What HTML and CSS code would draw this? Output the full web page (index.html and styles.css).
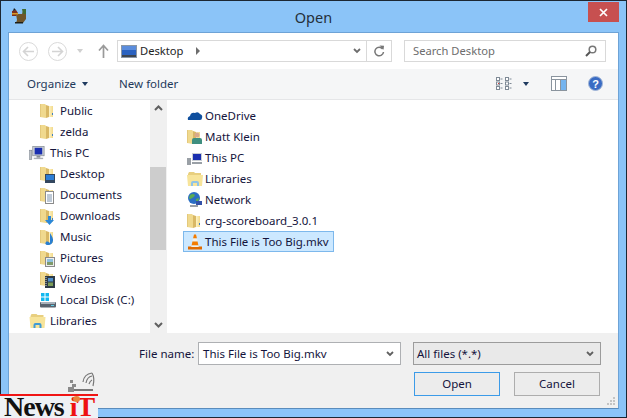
FILE: index.html
```html
<!DOCTYPE html>
<html lang="en">
<head>
<meta charset="utf-8">
<title>Open</title>
<link rel="stylesheet" href="styles.css">
</head>
<body>
<svg class="defs" width="0" height="0" aria-hidden="true">
  <defs>
    <linearGradient id="fy" x1="0" y1="0" x2="1" y2="0"><stop offset="0" stop-color="#fdf3c4"/><stop offset="1" stop-color="#f2d98a"/></linearGradient>
    <symbol id="folder" viewBox="0 0 16 16">
      <path d="M0 1h5l1 1v13l-6-1z" fill="#f0d98e"/>
      <path d="M0 1v13" stroke="#cfae5c" stroke-width=".7"/>
      <path d="M6 2l3 1v11l-3 1z" fill="#d9b865"/>
      <path d="M9 3h4v11H9z" fill="url(#fy)"/>
      <path d="M12 10h1v2h-1z" fill="#3f7fc0"/>
    </symbol>
  </defs>
</svg>
<div class="window">
  <header class="titlebar">
    <svg class="app-icon" width="16" height="16" viewBox="0 0 16 16"><path d="M5 6h6l1-3h3v8l-3 4H5l1-3z" fill="#6f552c"/><path d="M11 1h4v5h-3z" fill="#3f6b34"/><path d="M1 3l4-1 2 3-2 3H1z" fill="#7d2e1c"/><path d="M3 0l2 2-3 1z" fill="#1c1c1c"/><path d="M1 5h6v1.500H1z" fill="#d89a28"/><path d="M4 14h8v1.500H4z" fill="#1f1f16"/></svg>
    <h1 class="title">Open</h1>
    <button class="close" aria-label="Close"><svg width="9" height="9" viewBox="0 0 9 9"><path d="M1 1l7 7M8 1l-7 7" stroke="#fff" stroke-width="1.7"/></svg></button>
  </header>
  <main class="client">
    <nav class="navbar">
      <span class="circle"><svg width="13" height="11" viewBox="0 0 13 11"><path d="M6 1L1.500 5.500 6 10M2 5.500h10" fill="none" stroke="#d4d4d4" stroke-width="1.600"/></svg></span>
      <span class="circle"><svg width="13" height="11" viewBox="0 0 13 11"><path d="M7 1l4.500 4.500L7 10M11 5.500H1" fill="none" stroke="#d4d4d4" stroke-width="1.600"/></svg></span>
      <i class="caret caret-light"></i>
      <svg class="up" width="11" height="14" viewBox="0 0 11 14"><path d="M5.500 14V2M1 6.500l4.500-5 4.500 5" fill="none" stroke="#9a9a9a" stroke-width="1.700"/></svg>
      <div class="address">
        <svg class="desk" width="16" height="13" viewBox="0 0 16 13"><rect width="16" height="13" fill="#8a97a6"/><rect x="1" y="1" width="14" height="9" fill="#2a62c0"/><rect x="1" y="1" width="14" height="4" fill="#5b8ddd"/><rect x="1" y="10" width="14" height="2" fill="#3d4650"/></svg>
        <span class="crumb">Desktop</span>
        <i class="crumb-arrow"></i>
        <span class="grow"></span>
        <svg class="chev" width="8" height="6" viewBox="0 0 8 6"><path d="M1 1l3 3 3-3" fill="none" stroke="#6d6d6d" stroke-width="1.800"/></svg>
        <span class="refresh"><svg width="11" height="12" viewBox="0 0 11 12"><path d="M8.700 4A4.300 4.300 0 1 0 9.500 7" fill="none" stroke="#777" stroke-width="1.500"/><path d="M5.500 0.500l4.500.2-.5 4z" fill="#777"/></svg></span>
      </div>
      <div class="search">
        <span>Search Desktop</span>
        <svg width="12" height="12" viewBox="0 0 12 12"><circle cx="7.500" cy="4.500" r="3.300" fill="none" stroke="#777" stroke-width="1.500"/><path d="M5 7l-4 4" stroke="#555" stroke-width="2"/></svg>
      </div>
    </nav>
    <div class="toolbar">
      <span class="tool">Organize</span><i class="caret caret-dark"></i>
      <span class="tool newfolder">New folder</span>
      <span class="grow"></span>
      <svg class="views" width="16" height="13" viewBox="0 0 16 13"><g fill="#fff" stroke="#7f8a96"><rect x=".5" y=".5" width="3" height="3"/><rect x=".5" y="5" width="3" height="3"/><rect x=".5" y="9.500" width="3" height="3"/><rect x="9.500" y=".5" width="3" height="3"/><rect x="9.500" y="5" width="3" height="3"/><rect x="9.500" y="9.500" width="3" height="3"/></g><path d="M4.500 2h2M4.500 6.500h2M4.500 11h2M13.500 2h2M13.500 6.500h2M13.500 11h2" stroke="#7f8a96"/><rect x="2" y="6" width="1" height="1" fill="#d33"/></svg>
      <i class="caret caret-dark caret-views"></i>
      <svg class="pane-icon" width="16" height="15" viewBox="0 0 16 15"><rect x=".5" y=".5" width="15" height="14" fill="#fff" stroke="#8a949e"/><path d="M.5 3.500h15M4.500 3.500v11M9.500 3.500v11" stroke="#8a949e"/><rect x="10" y="4" width="5" height="10" fill="#74b4ef"/></svg>
      <svg class="help" width="15" height="15" viewBox="0 0 15 15"><circle cx="7.500" cy="7.500" r="7" fill="#3a6cc4" stroke="#a3b7d6"/><text x="7.500" y="11.500" class="help-q">?</text></svg>
    </div>
    <div class="panes">
      <ul class="tree">
        <li class="child"><svg class="ico"><use href="#folder"/></svg>Public</li>
        <li class="child"><svg class="ico"><use href="#folder"/></svg>zelda</li>
        <li class="root"><svg class="ico" viewBox="0 0 18 16"><rect x="4" y="1" width="12" height="10" fill="#c9ced4" stroke="#6e7680" stroke-width=".6"/><rect x="6" y="2.500" width="8" height="7" fill="#1a2fb0"/><rect x="8" y="11" width="4" height="2" fill="#8a9098"/><rect x="5" y="13" width="10" height="1.500" fill="#a9aeb4"/><rect x="0" y="5" width="3" height="10" fill="#b9bec4" stroke="#6e7680" stroke-width=".5"/></svg>This PC</li>
        <li class="child"><svg class="ico"><use href="#folder"/></svg><svg class="badge" width="10" height="9" viewBox="0 0 10 9"><rect width="10" height="9" fill="#33475f"/><rect x="1" y="1" width="8" height="5" fill="#2c7ed6"/></svg>Desktop</li>
        <li class="child"><svg class="ico"><use href="#folder"/></svg><svg class="badge" width="9" height="13" viewBox="0 0 9 13"><rect x=".5" y=".5" width="8" height="12" fill="#fff" stroke="#8b8b8b"/><path d="M2 4h5M2 6h5M2 8h5M2 10h5" stroke="#7d93ad"/></svg>Documents</li>
        <li class="child"><svg class="ico"><use href="#folder"/></svg><svg class="badge" width="9" height="9" viewBox="0 0 9 9"><path d="M3 0h3v4h3L4.500 9 0 4h3z" fill="#2b88d8"/></svg>Downloads</li>
        <li class="child"><svg class="ico"><use href="#folder"/></svg><svg class="badge" width="9" height="13" viewBox="0 0 9 13"><path d="M5 0c1 2 3 4 3 7s-2 5-5 5-3-2-2-3 3 0 4 1z" fill="#2a7fd0"/></svg>Music</li>
        <li class="child"><svg class="ico"><use href="#folder"/></svg><svg class="badge" width="10" height="10" viewBox="0 0 10 10"><rect x=".5" y=".5" width="9" height="9" fill="#eee" stroke="#8a8a8a"/><rect x="2" y="2" width="6" height="3" fill="#8fc0dd"/><rect x="2" y="5" width="6" height="3" fill="#7f9a6a"/></svg>Pictures</li>
        <li class="child"><svg class="ico"><use href="#folder"/></svg><svg class="badge" width="10" height="12" viewBox="0 0 10 12"><rect width="10" height="12" fill="#2d3a45"/><rect x="3" y="2" width="5" height="3.500" fill="#4f8ec9"/><rect x="3" y="6.500" width="5" height="3.500" fill="#7b9c58"/><path d="M1 1v10" stroke="#ddd" stroke-dasharray="1 1"/></svg>Videos</li>
        <li class="child"><svg class="ico" viewBox="0 0 16 16"><path d="M1 1h3.500v3.500H1zM5.500 1H9v3.500H5.500zM1 5.500h3.500V9H1zM5.500 5.500H9V9H5.500z" fill="#12b8f0"/><rect x="0" y="10" width="16" height="5.500" rx="1" fill="#59636e"/><rect x="1" y="10" width="14" height="2" fill="#a8b2bc"/><rect x="11" y="13" width="3" height="1" fill="#5fd0e8"/></svg>Local Disk (C:)</li>
        <li class="root"><svg class="ico" viewBox="0 0 16 16"><path d="M1 3l1-2h5l1 1h6v2H1z" fill="#e8cf7f"/><path d="M0 4h16l-1 11H1z" fill="#f7e49a"/><path d="M4 15v-3q0-2 2-2h4q2 0 2 2v3h-2v-3H6v3z" fill="#3f9ad6"/></svg>Libraries</li>
      </ul>
      <div class="scrollbar">
        <svg class="sb-arrow" width="9" height="6" viewBox="0 0 9 6"><path d="M1 5l3.500-3.500L8 5" fill="none" stroke="#606060" stroke-width="2"/></svg>
        <div class="thumb"></div>
        <svg class="sb-arrow" width="9" height="6" viewBox="0 0 9 6"><path d="M1 1l3.500 3.500L8 1" fill="none" stroke="#606060" stroke-width="2"/></svg>
      </div>
      <ul class="files">
        <li><svg class="ico" viewBox="0 0 16 16"><path d="M1 12q-1-3 2-4 1-4 5-3 3-2 5 1 3 1 2 4 0 2-2 2H3q-1 0-2 0z" fill="#0f4f9e"/></svg>OneDrive</li>
        <li><svg class="ico"><use href="#folder"/></svg><svg class="badge-file" width="10" height="12" viewBox="0 0 10 12"><circle cx="5" cy="3" r="2.500" fill="#d9a98a"/><path d="M0 12V8q0-2 2-2h6q2 0 2 2v4z" fill="#3f8f7f"/></svg>Matt Klein</li>
        <li><svg class="ico" viewBox="0 0 16 16"><rect x="5" y="3" width="10" height="8" fill="#c9ced4"/><rect x="6" y="4" width="8" height="6" fill="#1a2fb0"/><rect x="0" y="8" width="4" height="7" fill="#9aa0a6"/><rect x="5" y="12" width="10" height="2" fill="#9aa0a6"/></svg>This PC</li>
        <li><svg class="ico" viewBox="0 0 16 16"><path d="M1 3l1-2h5l1 1h6v2H1z" fill="#e8cf7f"/><path d="M0 4h16l-1 11H1z" fill="#f7e49a"/><path d="M4 15v-3q0-2 2-2h4q2 0 2 2v3h-2v-3H6v3z" fill="#8fc4e8"/></svg>Libraries</li>
        <li><svg class="ico" viewBox="0 0 16 16"><circle cx="7" cy="6" r="6" fill="#2b6fc4"/><path d="M3 3q3-2 5 0-1 3-3 3-2 2-3 0zM9 7l3-1-1 4-2 1z" fill="#5bab52"/><rect x="9" y="9" width="6" height="4" fill="#3352a8"/><rect x="3" y="13" width="8" height="2" fill="#9aa0a6"/></svg>Network</li>
        <li><svg class="ico"><use href="#folder"/></svg>crg-scoreboard_3.0.1</li>
        <li class="selected"><svg class="ico" viewBox="0 0 16 16"><path d="M7 0.500h2l1 4H6z" fill="#f47c00"/><path d="M6 4.500h4l.6 3H5.400z" fill="#f4f0e8"/><path d="M5.400 7.500h5.200l.8 4H4.600z" fill="#f47c00"/><path d="M1 12.500h14v3H1z" fill="#e06a00"/><path d="M4.600 11.500h6.800l.4 1.500H4.200z" fill="#f4f0e8"/></svg>This File is Too Big.mkv</li>
      </ul>
    </div>
    <footer class="footer">
      <div class="row">
        <label class="fname-label">File name:</label>
        <div class="combo"><span>This File is Too Big.mkv</span><svg width="8" height="6" viewBox="0 0 8 6"><path d="M1 1l3 3 3-3" fill="none" stroke="#606060" stroke-width="1.800"/></svg></div>
        <div class="combo filter"><span>All files (*.*)</span><svg width="8" height="6" viewBox="0 0 8 6"><path d="M1 1l3 3 3-3" fill="none" stroke="#606060" stroke-width="1.800"/></svg></div>
      </div>
      <div class="row buttons">
        <button class="btn default">Open</button>
        <button class="btn">Cancel</button>
      </div>
      <svg class="grip" width="8" height="8" viewBox="0 0 8 8"><path d="M6 0h2v2H6zM3 3h2v2H3zM6 3h2v2H6zM0 6h2v2H0zM3 6h2v2H3zM6 6h2v2H6z" fill="#c4c4c4"/></svg>
    </footer>
  </main>
  <div class="watermark">
    <svg class="wm-key" width="30" height="22" viewBox="0 0 30 22"><path d="M4 19h22" stroke="#777" stroke-width="2"/><path d="M1 16h6v5H1zM5 13h4v3H5zM3 9h3v3H3z" fill="#8a8a8a"/><path d="M16 11q1-8 9-9M19 12q1-6 6-7M22 13q1-3 3-4" fill="none" stroke="#777" stroke-width="1.200"/><path d="M25 2q3 5 1 13" fill="none" stroke="#777" stroke-width="1.200"/></svg>
    <span class="wm-dot"></span>
    <span class="wm-text">News <b>iT</b></span>
  </div>
</div>
</body>
</html>
```

FILE: styles.css
```css
* { box-sizing: border-box; }
html, body { margin: 0; padding: 0; }
body { width: 627px; height: 418px; overflow: hidden; font: 11.5px/16px "Noto Sans", sans-serif; color: #1e1e3c; }
.defs { position: absolute; }
ul { list-style: none; margin: 0; padding: 0; }
.grow { flex: 1; }

.window { position: relative; width: 627px; height: 418px; display: flex; flex-direction: column; background: #8bc4f8; border: 1px solid #1c2733; }
.titlebar { height: 31px; display: flex; align-items: center; justify-content: center; position: relative; flex: none; }
.app-icon { position: absolute; left: 10px; top: 7px; }
.title { margin: 0; font: 400 14.5px/20px "Noto Sans", sans-serif; color: #25303a; }
.close { position: absolute; right: 7px; top: 1px; width: 31px; height: 20px; padding: 0; border: 0; background: #c75050; display: flex; align-items: center; justify-content: center; }

.client { flex: 1; margin: 0 7px 8px; border: 1px solid #6ea3d6; border-bottom-color: #5a8cbc; background: #f0f0f0; display: flex; flex-direction: column; min-height: 0; }
.navbar { height: 36px; flex: none; background: #fff; display: flex; align-items: center; padding: 0 12px 0 10px; }
.circle { width: 19px; height: 19px; border: 1px solid #dadada; border-radius: 50%; display: flex; align-items: center; justify-content: center; margin-right: 10px; }
.caret { display: block; width: 0; height: 0; border-style: solid; border-width: 4px 3.500px 0; border-color: transparent; }
.caret-light { border-top-color: #d0d0d0; margin-right: 15px; }
.caret-dark { border-top-color: #1e3a5f; }
.up { margin-right: 8px; }
.address { width: 275px; height: 22px; border: 1px solid #d9d9d9; display: flex; align-items: center; padding-left: 3px; font-size: 11.2px; }
.desk { margin-right: 3px; }
.crumb { color: #1e1e1e; }
.crumb-arrow { width: 0; height: 0; border-style: solid; border-width: 4px 0 4px 4px; border-color: transparent transparent transparent #6d6d6d; margin-left: 12px; }
.chev { margin-right: 5px; }
.refresh { width: 25px; height: 20px; border-left: 1px solid #d9d9d9; display: flex; align-items: center; justify-content: center; }
.search { width: 202px; height: 22px; margin-left: 12px; border: 1px solid #d9d9d9; display: flex; align-items: center; justify-content: space-between; padding: 0 8px; color: #6d6d6d; font-size: 11.2px; }

.toolbar { height: 31px; flex: none; background: #f5f6f7; border-bottom: 1px solid #e5e6e8; display: flex; align-items: center; padding: 0 15px 1px 18px; color: #1e395b; }
.toolbar .caret-dark { margin-left: 6px; }
.newfolder { margin-left: 31px; }
.views { margin-right: 11px; }
.caret-views { margin-left: 0 !important; margin-right: 22px; }
.pane-icon { margin-right: 21px; }
.help-q { font: 700 11px "Liberation Sans", sans-serif; fill: #fff; text-anchor: middle; }

.panes { height: 233px; flex: none; display: flex; background: #fff; }
.tree { width: 141px; overflow: hidden; flex: none; }
.tree li { height: 21px; display: flex; align-items: center; position: relative; color: #14143c; white-space: nowrap; }
.ico { width: 16px; height: 16px; flex: none; }
.tree .root { padding-left: 20px; }
.tree .child { padding-left: 31px; }
.tree .root .ico { margin-right: 4px; width: 17px; }
.tree .child .ico { margin-right: 4px; }
.badge { position: absolute; left: 36px; bottom: 1px; }
.badge-file { position: absolute; left: 8px; bottom: 2px; }
.scrollbar { width: 16px; flex: none; background: #f0f0f0; display: flex; flex-direction: column; align-items: center; justify-content: space-between; padding: 5px 0 5px; position: relative; }
.thumb { position: absolute; left: 0; top: 67px; width: 16px; height: 83px; background: #cdcdcd; }
.files { flex: 1; border-left: 1px solid #f0f0f0; padding: 5px 0 0 16px; }
.files li { position: relative; height: 21px; width: 151px; display: flex; align-items: center; padding-left: 3px; border: 1px solid transparent; color: #14143c; white-space: nowrap; }
.files .ico { margin-right: 2px; }
.files .selected { background: #cce8ff; border-color: #7db8ec; }

.footer { flex: 1; position: relative; padding: 9px 0 0; display: flex; flex-direction: column; }
.row { display: flex; align-items: center; }
.fname-label { margin-left: 130px; width: 59px; color: #14143c; }
.combo { width: 203px; height: 23px; border: 1px solid #aeb0b3; background: #fff; display: flex; align-items: center; justify-content: space-between; padding: 0 6px 0 4px; color: #14143c; }
.filter { width: 188px; margin-left: 12px; background: #e9e9e9; border-color: #9c9c9c; padding-left: 3px; }
.buttons { padding: 7px 0 0 405px; gap: 14px; }
.btn { width: 86px; height: 24px; padding: 0; background: #ececec; border: 1px solid #adadad; font: inherit; color: #14143c; }
.btn.default { border-color: #3c9be8; }
.grip { position: absolute; right: 3px; bottom: 3px; }

.watermark { position: absolute; left: -1px; bottom: -1px; width: 98px; height: 24px; background: #eef1f4; border-top: 2px solid #f01515; }
.wm-text { position: absolute; left: 4px; top: 0; font: 700 28px/22px "Liberation Serif", serif; letter-spacing: -1px; color: #111; white-space: nowrap; }
.wm-text b { color: #ee1111; }
.wm-key { position: absolute; left: 67px; top: -25px; }
.wm-dot { position: absolute; left: 73px; top: 0; width: 7px; height: 6px; border-radius: 50%; background: #e8843a; z-index: 2; }
```
